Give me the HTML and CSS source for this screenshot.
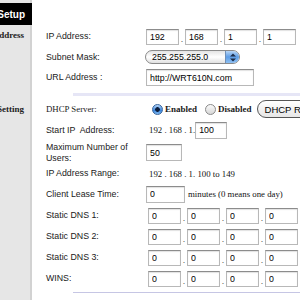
FILE: index.html
```html
<!DOCTYPE html>
<html lang="en">
<head>
  <meta charset="UTF-8" />
  <title>Basic Setup</title>
  <link rel="stylesheet" href="styles.css">
</head>
<body>
  <div class="page">
    <aside class="sidebar">
      <div class="side-title"><span>Network Setup</span></div>
      <div class="side-item side-router"><span>Router Address</span></div>
      <div class="side-item side-dhcp"><span>DHCP Server Setting</span></div>
    </aside>

    <main class="content">
      <!-- router address -->
      <div class="row">
        <label class="label">IP Address:</label>
        <div class="field">
          <input class="octet" type="text" value="192" />
          <span class="dot">.</span>
          <input class="octet" type="text" value="168" />
          <span class="dot">.</span>
          <input class="octet" type="text" value="1" />
          <span class="dot">.</span>
          <input class="octet" type="text" value="1" />
        </div>
      </div>
      <div class="row row-short">
        <label class="label">Subnet Mask:</label>
        <div class="field">
          <div class="select">
            <select><option>255.255.255.0</option></select>
            <span class="arrows">
              <svg width="6" height="9" viewBox="0 0 6 9"><path d="M0 3.5L3 0.5L6 3.5Z M0 5.5L3 8.5L6 5.5Z" fill="#1c2c48"/></svg>
            </span>
          </div>
        </div>
      </div>
      <div class="row">
        <label class="label">URL Address :</label>
        <div class="field">
          <input class="text-input url" type="text" value="http://WRT610N.com" />
        </div>
      </div>

      <div class="divider"></div>

      <!-- dhcp -->
      <div class="row row-short">
        <label class="label serif">DHCP Server:</label>
        <div class="field">
          <input class="radio" type="radio" name="dhcp" checked />
          <span class="radio-text">Enabled</span>
          <input class="radio" type="radio" name="dhcp" />
          <span class="radio-text">Disabled</span>
          <button class="pill">DHCP Reservation</button>
        </div>
      </div>
      <div class="row row-22">
        <label class="label">Start IP&nbsp; Address:</label>
        <div class="field text-field">
          <span class="serif-text">192 . 168 . 1.</span>
          <input class="text-input start" type="text" value="100" />
        </div>
      </div>
      <div class="row row-23">
        <label class="label">Maximum Number of Users:</label>
        <div class="field">
          <input class="text-input users" type="text" value="50" />
        </div>
      </div>
      <div class="row row-19">
        <label class="label">IP Address Range:</label>
        <div class="field text-field">
          <span class="serif-text">192 . 168 . 1. 100 to 149</span>
        </div>
      </div>
      <div class="row row-22">
        <label class="label">Client Lease Time:</label>
        <div class="field">
          <input class="text-input lease" type="text" value="0" />
          <span class="serif-text note">minutes (0 means one day)</span>
        </div>
      </div>
      <div class="row">
        <label class="label">Static DNS 1:</label>
        <div class="field dns">
          <input class="octet" type="text" value="0" /><span class="dot">.</span>
          <input class="octet" type="text" value="0" /><span class="dot">.</span>
          <input class="octet" type="text" value="0" /><span class="dot">.</span>
          <input class="octet" type="text" value="0" />
        </div>
      </div>
      <div class="row">
        <label class="label">Static DNS 2:</label>
        <div class="field dns">
          <input class="octet" type="text" value="0" /><span class="dot">.</span>
          <input class="octet" type="text" value="0" /><span class="dot">.</span>
          <input class="octet" type="text" value="0" /><span class="dot">.</span>
          <input class="octet" type="text" value="0" />
        </div>
      </div>
      <div class="row">
        <label class="label">Static DNS 3:</label>
        <div class="field dns">
          <input class="octet" type="text" value="0" /><span class="dot">.</span>
          <input class="octet" type="text" value="0" /><span class="dot">.</span>
          <input class="octet" type="text" value="0" /><span class="dot">.</span>
          <input class="octet" type="text" value="0" />
        </div>
      </div>
      <div class="row">
        <label class="label">WINS:</label>
        <div class="field dns">
          <input class="octet" type="text" value="0" /><span class="dot">.</span>
          <input class="octet" type="text" value="0" /><span class="dot">.</span>
          <input class="octet" type="text" value="0" /><span class="dot">.</span>
          <input class="octet" type="text" value="0" />
        </div>
      </div>

      <div class="divider divider-thin"></div>
    </main>
  </div>
</body>
</html>
```

FILE: styles.css
```css
body {
  margin: 0;
  background: #fff;
  font-family: 'Liberation Sans', Arial, sans-serif;
  font-size: 8.8px;
  color: #1a1a1a;
  overflow: hidden;
}
.page {
  display: flex;
  width: 300px;
  height: 300px;
  overflow: hidden;
}
.sidebar {
  width: 32px;
  flex: none;
  background: #e6e6e6;
  box-shadow: inset -2px 0 0 #d2d2d2;
}
.side-title {
  margin-top: 3px;
  height: 22px;
  background: #000;
  color: #fff;
  font-weight: bold;
  font-size: 10px;
  display: flex;
  align-items: center;
  justify-content: flex-end;
  padding-right: 7px;
  overflow: hidden;
  white-space: nowrap;
}
.side-item {
  display: flex;
  justify-content: flex-end;
  padding-right: 8px;
  overflow: hidden;
  white-space: nowrap;
  font-family: 'Liberation Serif', 'Times New Roman', serif;
  font-weight: bold;
  font-size: 9px;
  line-height: 11px;
  color: #222;
}
.side-router {
  margin-top: 5px;
}
.side-dhcp {
  margin-top: 63px;
}
.content {
  flex: 1;
  padding-top: 26px;
  padding-left: 14px;
}
.row {
  display: flex;
  align-items: center;
  height: 21px;
}
.row-short { height: 20px; }
.row-19 { height: 19px; }
.row-22 { height: 22px; }
.row-23 { height: 23px; }
.label {
  width: 100px;
  flex: none;
  line-height: 11px;
}
.serif {
  font-family: 'Liberation Serif', 'Times New Roman', serif;
}
.field {
  display: flex;
  align-items: center;
  white-space: nowrap;
}
.text-field {
  padding-left: 3px;
}
.dns {
  padding-left: 2px;
}
input[type="text"] {
  box-sizing: border-box;
  height: 17px;
  margin: 0;
  padding: 0 3px;
  border: 1px solid #b8b8b8;
  border-top-color: #8c8c8c;
  box-shadow: inset 0 1px 1px rgba(0, 0, 0, 0.12);
  font-family: 'Liberation Sans', Arial, sans-serif;
  font-size: 8.8px;
  color: #000;
  background: #fff;
}
.octet {
  width: 33px;
  height: 16px !important;
}
.dot {
  width: 6px;
  text-align: center;
  align-self: flex-end;
  line-height: 12px;
  color: #555;
}
.url { width: 108px; }
.start { width: 32px; margin-left: 2px; }
.users { width: 36px; }
.lease { width: 39px; }
.select {
  display: flex;
  align-items: stretch;
  width: 95px;
  height: 14px;
  margin-left: -1px;
  box-sizing: border-box;
  border: 1px solid #8a8a8a;
  border-radius: 7px;
  overflow: hidden;
  background: linear-gradient(#e4e4e4, #ffffff 50%, #e0e0e0);
}
.select select {
  flex: 1;
  appearance: none;
  -webkit-appearance: none;
  border: none;
  background: transparent;
  padding: 0 0 0 6px;
  margin: 0;
  font-family: 'Liberation Sans', Arial, sans-serif;
  font-size: 8.8px;
  color: #000;
}
.arrows {
  width: 13px;
  display: flex;
  align-items: center;
  justify-content: center;
  background: linear-gradient(#b8d6f6, #5d9de6 50%, #8ec0f2);
  border-left: 1px solid #6d8fb8;
}
.radio {
  appearance: none;
  -webkit-appearance: none;
  box-sizing: border-box;
  width: 11px;
  height: 11px;
  margin: 0;
  border-radius: 50%;
  border: 1px solid #8a8a8a;
  background: linear-gradient(#fbfbfb, #d6d6d6);
}
.radio:first-child {
  margin-left: 6px;
}
.radio:checked {
  border-color: #38659c;
  background: radial-gradient(circle, #0d1d3a 0 2px, transparent 2.6px),
    linear-gradient(#b6d6f8, #3a84dc 60%, #7fb8f0);
}
.radio-text {
  font-family: 'Liberation Serif', 'Times New Roman', serif;
  font-weight: bold;
  font-size: 9px;
  margin: 0 8px 0 2px;
}
.pill {
  flex: none;
  height: 18px;
  margin-left: -3px;
  padding: 0 7px;
  border: 1px solid #555;
  border-radius: 9px;
  background: linear-gradient(#ffffff, #e6e6e6);
  font-family: 'Liberation Sans', Arial, sans-serif;
  font-size: 9.5px;
  color: #000;
}
.serif-text {
  font-family: 'Liberation Serif', 'Times New Roman', serif;
  font-size: 8.8px;
  color: #111;
}
.note {
  margin-left: 3px;
}
.divider {
  height: 3px;
  margin: 5px 0 3px 27px;
  background: #e6e6f6;
}
.divider-thin {
  height: 1px;
  margin-top: 3px;
  background: #c6c6e4;
}
```
